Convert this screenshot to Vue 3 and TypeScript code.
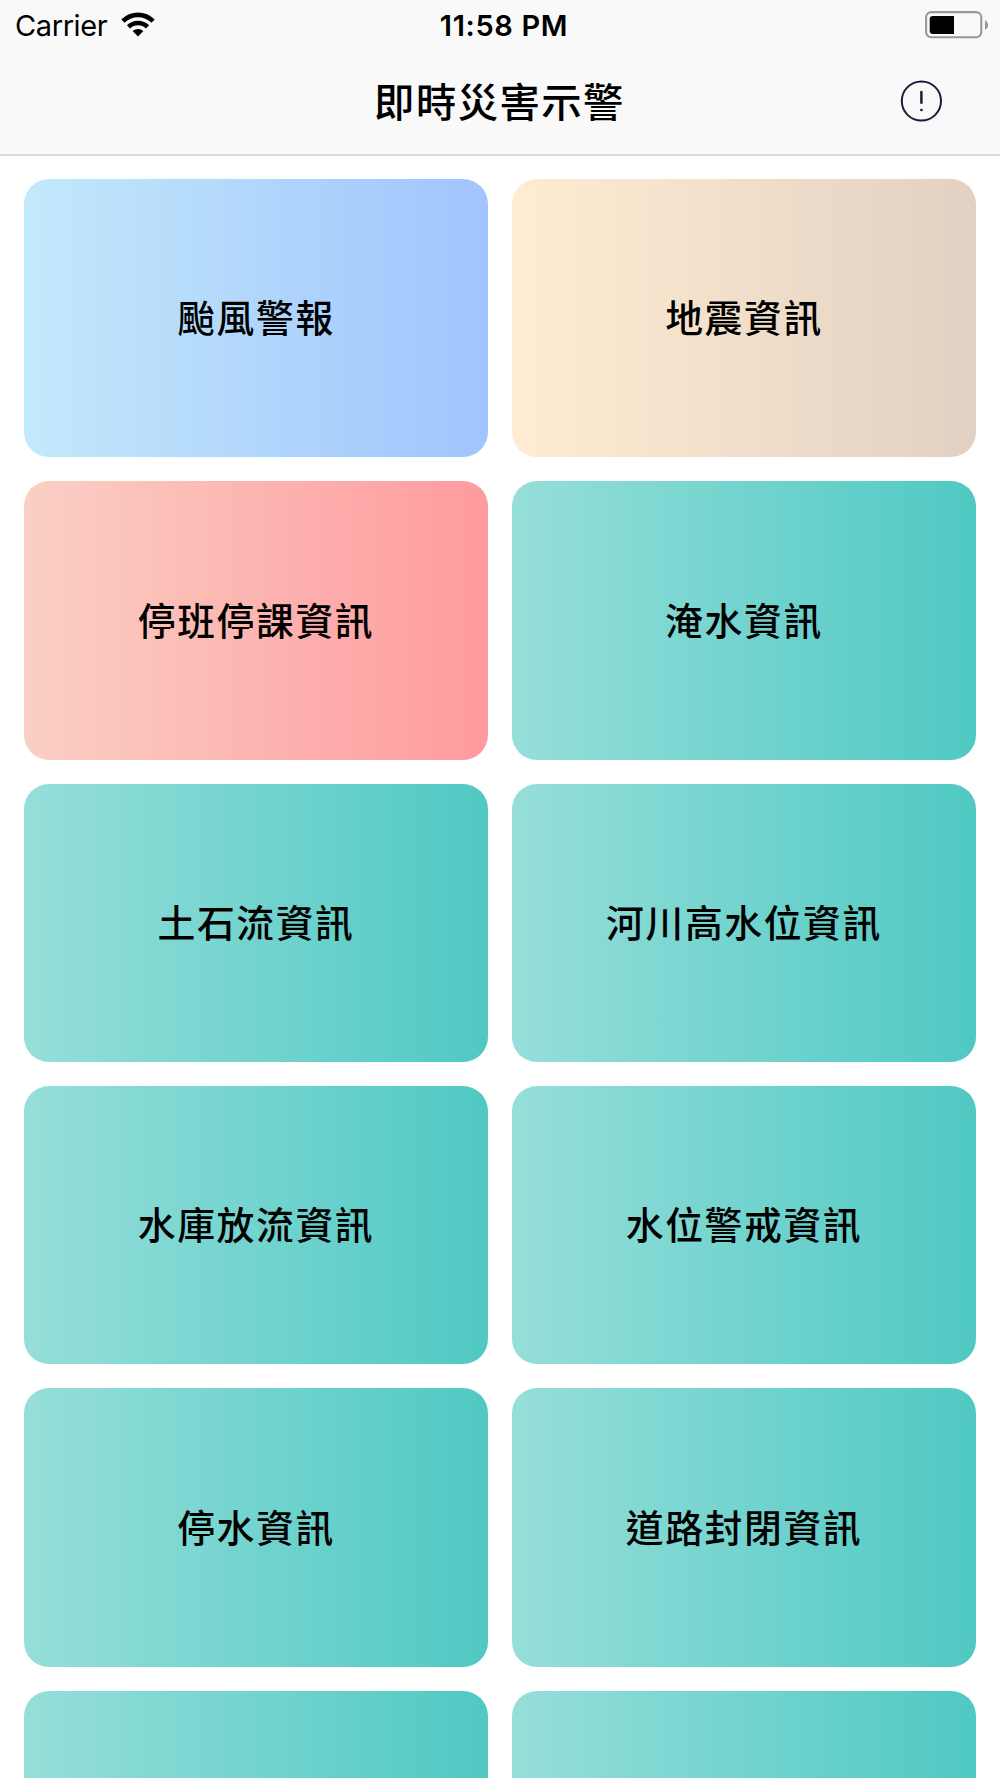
<script setup lang="ts">
interface AlertCard {
  title: string
  theme: 'typhoon' | 'quake' | 'closure' | 'general'
}

const cards: AlertCard[] = [
  { title: '颱風警報', theme: 'typhoon' },
  { title: '地震資訊', theme: 'quake' },
  { title: '停班停課資訊', theme: 'closure' },
  { title: '淹水資訊', theme: 'general' },
  { title: '土石流資訊', theme: 'general' },
  { title: '河川高水位資訊', theme: 'general' },
  { title: '水庫放流資訊', theme: 'general' },
  { title: '水位警戒資訊', theme: 'general' },
  { title: '停水資訊', theme: 'general' },
  { title: '道路封閉資訊', theme: 'general' },
  { title: '', theme: 'general' },
  { title: '', theme: 'general' },
]
</script>

<template>
  <div class="screen">
    <header class="header">
      <div class="status">
        <div class="status-left">
          <span class="carrier">Carrier</span>
          <svg class="wifi" viewBox="0 0 34 25" width="34" height="25">
            <path d="M0.3 7.5 A23.5 23.5 0 0 1 33.7 7.5 L30.5 10.8 A19 19 0 0 0 3.5 10.8 Z" />
            <path d="M5.9 13.3 A15.7 15.7 0 0 1 28.1 13.3 L24.9 16.6 A11.2 11.2 0 0 0 9.1 16.6 Z" />
            <path d="M11.6 19.1 A7.7 7.7 0 0 1 22.4 19.1 L17 24.6 Z" />
          </svg>
        </div>
        <span class="clock">11:58 PM</span>
        <svg class="battery" viewBox="0 0 64 28" width="64" height="28">
          <rect x="1.1" y="1.1" width="55.2" height="25.1" rx="5.2" fill="none" stroke="#979797" stroke-width="2.1" />
          <path d="M29 4.9 V23 H8 Q4.7 23 4.7 19.7 V8.2 Q4.7 4.9 8 4.9 Z" fill="#000" />
          <path d="M60 9 Q63.2 11 63.2 14 Q63.2 17 60 19 Z" fill="#979797" />
        </svg>
      </div>
      <div class="navbar">
        <span></span>
        <h1 class="title">即時災害示警</h1>
        <button class="info" type="button" aria-label="資訊">
          <svg viewBox="0 0 42 42" width="42" height="42">
            <circle cx="21.4" cy="21" r="19.6" fill="none" stroke="#1c1c38" stroke-width="2" />
            <path d="M21.4 12 V22.8" stroke="#1c1c38" stroke-width="2.5" stroke-linecap="round" />
            <circle cx="21.4" cy="30" r="1.35" fill="#1c1c38" />
          </svg>
        </button>
      </div>
    </header>
    <main class="grid">
      <section v-for="(card, i) in cards" :key="i" class="card" :class="card.theme">
        <span class="label">{{ card.title }}</span>
      </section>
    </main>
  </div>
</template>

<style>
body {
  margin: 0;
}
</style>

<style scoped>
.screen {
  width: 1000px;
  height: 1778px;
  overflow: hidden;
  background: #fff;
  color: #000;
  font-family: Inter, "Noto Sans CJK TC", sans-serif;
}
.header {
  box-sizing: border-box;
  height: 156px;
  background: #f9f9f9;
  border-bottom: 2px solid #dcdcdc;
}
.status {
  display: grid;
  grid-template-columns: 1fr auto 1fr;
  align-items: center;
  height: 50px;
  padding: 0 11px 0 15px;
}
.status-left {
  display: flex;
  align-items: center;
  gap: 14px;
}
.wifi {
  margin-bottom: 2px;
}
.carrier {
  padding-top: 1px;
  font-size: 29px;
  line-height: 50px;
  letter-spacing: -0.4px;
}
.clock {
  padding: 1px 0 0 4px;
  font-size: 29px;
  font-weight: 600;
  line-height: 50px;
  letter-spacing: 0.65px;
}
.battery {
  justify-self: end;
  margin-bottom: 2px;
}
.navbar {
  display: grid;
  grid-template-columns: 1fr auto 1fr;
  align-items: center;
  height: 102px;
  padding: 0 58px;
}
.title {
  margin: 0 1px 3px 0;
  font-family: "Noto Sans CJK TC", sans-serif;
  font-size: 40.3px;
  font-weight: 500;
  line-height: 99px;
  letter-spacing: 1.5px;
}
.info {
  justify-self: end;
  display: flex;
  margin-bottom: 1px;
  padding: 0;
  border: 0;
  background: none;
}
.grid {
  display: grid;
  grid-template-columns: 464px 464px;
  grid-auto-rows: 278.3px;
  gap: 24px;
  padding: 23.2px 24px 0;
}
.card {
  display: flex;
  align-items: center;
  justify-content: center;
  border-radius: 25px;
}
.label {
  margin-bottom: 4px;
  font-family: "Noto Sans CJK TC", sans-serif;
  font-size: 37.8px;
  font-weight: 500;
  line-height: 50px;
  letter-spacing: 1.6px;
}
.typhoon {
  background: linear-gradient(to right, #c2e9fb, #a1c4fd);
}
.quake {
  background: linear-gradient(to right, #ffecd2, #e2d1c3);
}
.closure {
  background: linear-gradient(to right, #fad0c4, #ff9a9e);
}
.general {
  background: linear-gradient(to right, #96deda, #50c9c3);
}
</style>
